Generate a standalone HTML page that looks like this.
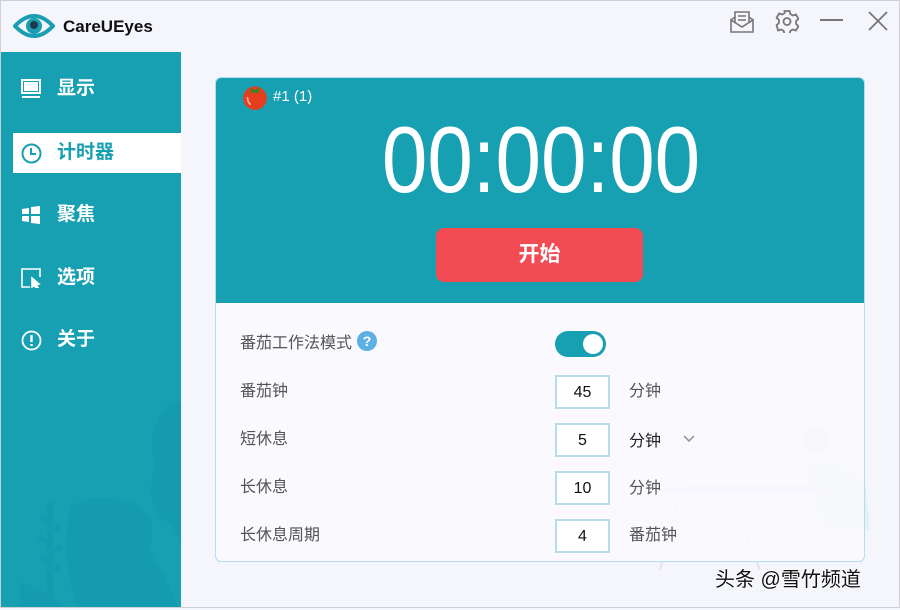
<!DOCTYPE html>
<html><head><meta charset="utf-8"><style>
*{margin:0;padding:0;box-sizing:border-box}
body{width:900px;height:608px;overflow:hidden;background:#f4f6fc;font-family:"Liberation Sans","Noto Sans CJK SC",sans-serif;position:relative}
.title{position:absolute;left:0;top:0;width:900px;height:52px;background:#f5f6fc;border-top:1px solid #d0d0d4}
.side{position:absolute;left:0;top:52px;width:181px;height:556px;background:#179fb2;overflow:hidden}
.nav{position:absolute;left:0;width:181px;height:40px;color:#fff;font-weight:bold;font-size:19px;line-height:40px}
.nav span{position:absolute;left:57px}
.nav svg{position:absolute;left:21px;top:10px}
.sel{background:#fff;color:#179fb2;left:13px;width:168px}
.sel span{left:44px}.sel svg{left:8px}
.card{position:absolute;left:215px;top:77px;width:650px;height:485px;border:1px solid #b7dcef;border-radius:6px;background:rgba(250,250,254,.9);overflow:hidden}
.top{position:absolute;left:0;top:0;width:650px;height:225px;background:#179fb2}
.timer{position:absolute;left:0;width:650px;top:32px;text-align:center;color:#fff;font-size:94px;line-height:100px;transform:scaleX(.87);transform-origin:325px 0}
.btn{position:absolute;left:220px;top:150px;width:207px;height:54px;background:#f24b53;border-radius:8px;color:#fff;font-weight:bold;font-size:21px;text-align:center;line-height:54px}
.lbl{position:absolute;left:24px;font-size:16px;color:#555}
.box{position:absolute;left:339px;width:55px;height:34px;border:2px solid #b7dcef;background:#fff;text-align:center;line-height:32px;font-size:16px;color:#111}
.unit{position:absolute;left:413px;font-size:16px;color:#555}
</style></head><body>
<div class="title">
<svg style="position:absolute;left:13px;top:11px" width="42" height="28" viewBox="0 0 42 28"><path d="M2 14Q21 -6 40 14Q21 34 2 14Z" fill="none" stroke="#1a9eb2" stroke-width="4"/><circle cx="21" cy="14" r="8" fill="#1a9eb2"/><circle cx="21" cy="13" r="4" fill="#1d3a4c"/></svg>
<div style="position:absolute;left:63px;top:16px;font-size:17px;font-weight:bold;color:#111">CareUEyes</div>
<svg style="position:absolute;left:730px;top:10px" width="24" height="22" viewBox="0 0 24 22" fill="none" stroke="#777" stroke-width="1.6"><path d="M1 9V21H23V9L12 16Z M1 9L5 6M23 9L19 6M5 12V1H19V12M8 5H16M8 9H16"/></svg>
<svg style="position:absolute;left:775px;top:8px" width="24" height="24" viewBox="0 0 24 24" fill="none" stroke="#777" stroke-width="1.8"><path d="M9.5 2h5l.8 3 2.6 1.5 3-1 2.5 4.3-2.3 2.2v3l2.3 2.2-2.5 4.3-3-1-2.6 1.5-.8 3h-5l-.8-3-2.6-1.5-3 1L1.6 16.2l2.3-2.2v-3L1.6 8.8 4.1 4.5l3 1L9.7 4z"/><circle cx="12" cy="12.5" r="3.5"/></svg>
<div style="position:absolute;left:820px;top:18px;width:23px;height:2px;background:#777"></div>
<svg style="position:absolute;left:868px;top:10px" width="20" height="20" stroke="#777" stroke-width="1.8"><path d="M1 1L19 19M19 1L1 19"/></svg>
</div>
<div class="side">
<svg style="position:absolute;left:145px;top:345px" width="40" height="215" viewBox="0 0 40 215"><path d="M20 10Q35 0 40 10V150Q30 130 15 120Q0 100 10 70Q0 40 20 10Z" fill="#159bb0"/></svg>
<svg style="position:absolute;left:20px;top:440px" width="160" height="120" viewBox="0 0 160 120"><path d="M50 15Q70 0 110 10Q140 20 130 60Q150 90 160 120H60Q40 80 50 15Z" fill="#159bb0"/><path d="M30 10V120M30 30L20 25M30 50L18 45M30 70L20 65M30 40L40 35M30 60L42 55M30 80L40 75" stroke="#159bb0" stroke-width="6"/><path d="M0 90Q30 100 50 120H0Z" fill="#159bb0"/></svg>
<div class="nav" style="top:17px"><svg width="20" height="20" fill="none" stroke="#fff" stroke-width="2"><rect x="1" y="1" width="18" height="13"/><rect x="4" y="4" width="12" height="7" fill="#fff"/><path d="M1 18H19"/></svg><span>显示</span></div>
<div class="nav sel" style="top:81px"><svg width="21" height="21" fill="none" stroke="#179fb2" stroke-width="2"><circle cx="10.5" cy="10.5" r="9"/><path d="M10 5V11H15"/></svg><span>计时器</span></div>
<div class="nav" style="top:143px"><svg width="20" height="20" fill="#fff"><path d="M1 4L8 3V9H1ZM10 2L19 1V9H10ZM1 11H8V17L1 16ZM10 11H19V19L10 18Z"/></svg><span>聚焦</span></div>
<div class="nav" style="top:206px"><svg width="20" height="20" fill="none" stroke="#fff" stroke-width="1.6"><path d="M9 19H1V1H19V9"/><path d="M11 10L18 16L15 16.5L17 19.5L15.5 20.5L13.5 17.5L11 19Z" fill="#fff"/></svg><span>选项</span></div>
<div class="nav" style="top:268px"><svg width="21" height="21" fill="none" stroke="#fff" stroke-width="1.8"><circle cx="10.5" cy="10.5" r="9"/><path d="M10.5 5V12M10.5 14V16" stroke-width="2.4"/></svg><span>关于</span></div>
</div>
<svg style="position:absolute;left:640px;top:420px" width="260" height="190" viewBox="0 0 260 190"><circle cx="175" cy="20" r="14" fill="#ece8e4"/><path d="M165 40Q200 35 225 60L230 110H180Z" fill="#e2f2f2"/><rect x="20" y="65" width="160" height="8" fill="#e8dcf8"/><rect x="20" y="35" width="25" height="32" fill="#f6f4fa"/><path d="M40 73L20 150M90 73L120 150" stroke="#e8dcf8" stroke-width="2"/></svg>
<div class="card">
<div class="top">
<svg style="position:absolute;left:24px;top:3px" width="30" height="30" viewBox="0 0 28 28"><circle cx="14" cy="16" r="11" fill="#e63d1e"/><path d="M9 6L14 9L19 5L17 10L21 11H7L11 10Z" fill="#2c8a22"/><path d="M7 15Q7 20 10 22" stroke="#ffb0a0" stroke-width="1.5" fill="none"/></svg>
<div style="position:absolute;left:57px;top:10px;color:#fff;font-size:15px">#1 (1)</div>
<div class="timer">00:00:00</div>
<div class="btn">开始</div>
</div>
<div class="lbl" style="top:251px">番茄工作法模式</div>
<div style="position:absolute;left:141px;top:253px;width:20px;height:20px;border-radius:50%;background:#5cb0e4;color:#fff;font-size:14px;font-weight:bold;text-align:center;line-height:20px">?</div>
<div style="position:absolute;left:339px;top:253px;width:51px;height:26px;border-radius:13px;background:#179fb2"><div style="position:absolute;right:3px;top:3px;width:20px;height:20px;border-radius:50%;background:#fff"></div></div>
<div class="lbl" style="top:299px">番茄钟</div><div class="box" style="top:297px">45</div><div class="unit" style="top:299px">分钟</div>
<div class="lbl" style="top:347px">短休息</div><div class="box" style="top:345px">5</div><div class="unit" style="top:349px;color:#222">分钟</div>
<svg style="position:absolute;left:467px;top:357px" width="12" height="8" fill="none" stroke="#999" stroke-width="1.6"><path d="M1 1L6 6L11 1"/></svg>
<div class="lbl" style="top:395px">长休息</div><div class="box" style="top:393px">10</div><div class="unit" style="top:396px">分钟</div>
<div class="lbl" style="top:443px">长休息周期</div><div class="box" style="top:441px">4</div><div class="unit" style="top:443px">番茄钟</div>
</div>
<div style="position:absolute;left:715px;top:563px;font-size:20px;color:#111;text-shadow:0 0 2px #fff,0 0 2px #fff">头条 @雪竹频道</div>
<div style="position:absolute;left:0;top:0;width:900px;height:608px;border:1px solid #d0d0d4;pointer-events:none"></div>
</body></html>
